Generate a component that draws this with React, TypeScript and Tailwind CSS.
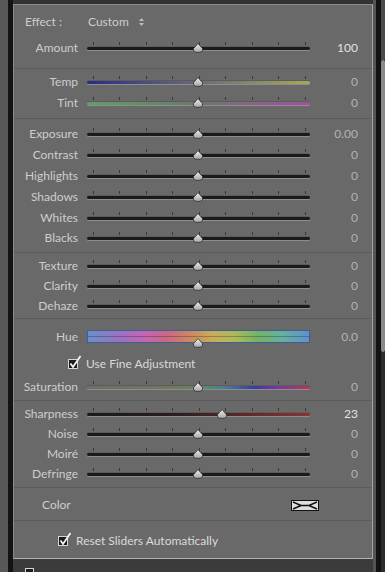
import React from 'react';

const ticks = [6, 32, 59, 85, 112, 138, 165, 191, 218];

function Knob({ x, top = 'top-[5px]' }: { x: number; top?: string }) {
  return (
    <svg
      className={`absolute ${top}`}
      style={{ left: x - 6 }}
      width="12"
      height="10"
      viewBox="0 0 12 10"
    >
      <defs>
        <linearGradient id="knobg" x1="0" y1="0" x2="0" y2="1">
          <stop offset="0" stopColor="#f0f0f0" />
          <stop offset="1" stopColor="#a4a4a4" />
        </linearGradient>
      </defs>
      <path
        d="M6 0.6 L10.4 5.4 Q11.6 9.4 6 9.4 Q0.4 9.4 1.6 5.4 Z"
        fill="url(#knobg)"
        stroke="#2c2c2c"
        strokeWidth="0.8"
      />
    </svg>
  );
}

function Track({ pos = 111, bar = 'bg-[#1a1a1a]' }: { pos?: number; bar?: string }) {
  return (
    <div className="relative ml-[9px] h-[20px] w-[223px]">
      {ticks.map((t) => (
        <div key={t} className="absolute top-[4px] h-[3px] w-px bg-[#383838]" style={{ left: t }} />
      ))}
      <div className={`absolute top-[9px] h-[3px] w-full rounded-full shadow-[0_1px_0_#8e8e8e,0_-1px_0_#5c5c5c] ${bar}`} />
      <Knob x={pos} />
    </div>
  );
}

function Row({
  label,
  value,
  pos,
  bar,
  bright,
  h = 'h-[20px]',
}: {
  label: string;
  value: string;
  pos?: number;
  bar?: string;
  bright?: boolean;
  h?: string;
}) {
  return (
    <div className={`flex items-center ${h}`}>
      <div className="w-[64px] text-right text-[12px] text-[#cdcdcd]">{label}</div>
      <Track pos={pos} bar={bar} />
      <div className={`w-[48px] text-right text-[12px] ${bright ? 'text-[#e2e2e2]' : 'text-[#b2b2b2]'}`}>
        {value}
      </div>
    </div>
  );
}

function Check() {
  return (
    <svg width="14" height="15" viewBox="0 0 14 15">
      <rect x="0.5" y="4.5" width="9" height="9" fill="#1c1c1c" stroke="#d6d6d6" />
      <path d="M2.5 8.5 L5 12 L12.5 1" fill="none" stroke="#f4f4f4" strokeWidth="1.8" />
    </svg>
  );
}

const Sep = () => <div className="h-px bg-[#5a5a5a]" />;

export default function App() {
  return (
    <div className="flex h-[572px] w-[385px] overflow-hidden bg-[#111] font-['Lato',sans-serif]">
      <div className="w-[8px] bg-[#585858]" />
      <div className="w-[5px] bg-[#141414]" />
      <div className="flex w-[360px] flex-col">
        <div className="h-[4px] shrink-0 bg-[#323232]" />
        <div className="shrink-0 border border-[#8a8a8a] border-r-[#a6a6a6] border-b-[#b4b4b4] bg-[#696969]">
          {/* effect + amount */}
          <div className="h-[63px] pt-[7px]">
            <div className="flex h-[20px] items-center text-[12px] text-[#cdcdcd]">
              <span className="ml-[11px] w-[63px]">Effect :</span>
              <span>Custom</span>
              <svg className="ml-[9px]" width="7" height="10" viewBox="0 0 7 10">
                <path d="M1 4 L3.5 1 L6 4 Z M1 6 L3.5 9 L6 6 Z" fill="#bdbdbd" />
              </svg>
            </div>
            <div className="mt-[6px]">
              <Row label="Amount" value="100" bright />
            </div>
          </div>
          <Sep />
          <div className="h-[49px] pt-[3px]">
            <Row label="Temp" value="0" bar="bg-[linear-gradient(to_right,#2a2c86,#6a6a7a_50%,#a6a858)]" />
            <div className="mt-[1px]">
              <Row label="Tint" value="0" bar="bg-[linear-gradient(to_right,#5fa062,#6a7a6a_50%,#a64ca6)]" />
            </div>
          </div>
          <Sep />
          <div className="h-[133px] pt-[4px]">
            <Row label="Exposure" value="0.00" h="h-[21px]" />
            <Row label="Contrast" value="0" h="h-[21px]" />
            <Row label="Highlights" value="0" h="h-[21px]" />
            <Row label="Shadows" value="0" h="h-[22px]" />
            <Row label="Whites" value="0" />
            <Row label="Blacks" value="0" />
          </div>
          <Sep />
          <div className="h-[65px] pt-[3px]">
            <Row label="Texture" value="0" />
            <Row label="Clarity" value="0" />
            <Row label="Dehaze" value="0" h="h-[19px]" />
          </div>
          <Sep />
          <div className="h-[81px] pt-[8px]">
            <div className="flex h-[20px] items-center">
              <div className="w-[64px] text-right text-[12px] text-[#cdcdcd]">Hue</div>
              <div className="relative ml-[9px] h-[20px] w-[223px]">
                <div className="absolute top-[3px] h-[13px] w-full border border-[#3f5f90] bg-[linear-gradient(to_right,#6890c8,#a070c0_16%,#c066b8_24%,#cc6884_36%,#cc8a60_47%,#c8ac58_56%,#aeba5a_66%,#72b268_77%,#66b0a0_88%,#6090cc)]">
                  <div className="mt-[5px] h-px bg-[#00000040]" />
                </div>
                <Knob x={111} top="top-[11px]" />
              </div>
              <div className="w-[48px] text-right text-[12px] text-[#b2b2b2]">0.0</div>
            </div>
            <div className="mt-[7px] flex h-[20px] items-center">
              <div className="ml-[54px] mt-[-3px]">
                <Check />
              </div>
              <span className="ml-[4px] text-[12px] text-[#dadada]">Use Fine Adjustment</span>
            </div>
            <div className="mt-[3px]">
              <Row
                label="Saturation"
                value="0"
                bar="bg-[linear-gradient(to_right,#6e6e66,#6e7a5e_40%,#5a8c6a_52%,#4a7c96_62%,#3a3ca2_75%,#7a38a2_86%,#b03a52)]"
              />
            </div>
          </div>
          <Sep />
          <div className="h-[86px] pt-[3px]">
            <Row label="Sharpness" value="23" pos={135} bright bar="bg-[linear-gradient(to_right,#1a1a1a,#2a1e1e_40%,#8a3434)]" />
            <Row label="Noise" value="0" />
            <Row label="Moiré" value="0" />
            <Row label="Defringe" value="0" />
          </div>
          <Sep />
          <div className="h-[32px] pt-[7px]">
            <div className="flex h-[20px] items-center">
              <span className="ml-[28px] text-[12px] text-[#cdcdcd]">Color</span>
              <div className="ml-[220px] h-[11px] w-[28px] border border-[#111] bg-[#dedede]">
                <svg width="26" height="9" viewBox="0 0 26 9" className="block">
                  <path d="M1 1 L9 4.5 L17 4.5 L25 1 M1 8 L9 4.5 M17 4.5 L25 8" fill="none" stroke="#111" strokeWidth="1.4" />
                </svg>
              </div>
            </div>
          </div>
          <Sep />
          <div className="h-[37px] pt-[10px]">
            <div className="flex h-[20px] items-center">
              <div className="ml-[44px] mt-[-3px]">
                <Check />
              </div>
              <span className="ml-[4px] text-[12px] text-[#dadada]">Reset Sliders Automatically</span>
            </div>
          </div>
        </div>
        <div className="min-h-0 flex-1 overflow-hidden bg-[#3b3b3b] pl-[12px] pt-[9px]">
          <div className="h-[9px] w-[9px] border border-[#d6d6d6] bg-[#1c1c1c]" />
        </div>
      </div>
      <div className="w-[3px] bg-[#545454]" />
      <div className="w-[5px] bg-[#121212]" />
      <div className="flex w-[4px] flex-col">
        <div className="h-[60px] bg-[#4a4a4a]" />
        <div className="h-[292px] rounded-sm bg-[#8a8a8a]" />
        <div className="flex-1 bg-[#2c2c2c]" />
      </div>
    </div>
  );
}
